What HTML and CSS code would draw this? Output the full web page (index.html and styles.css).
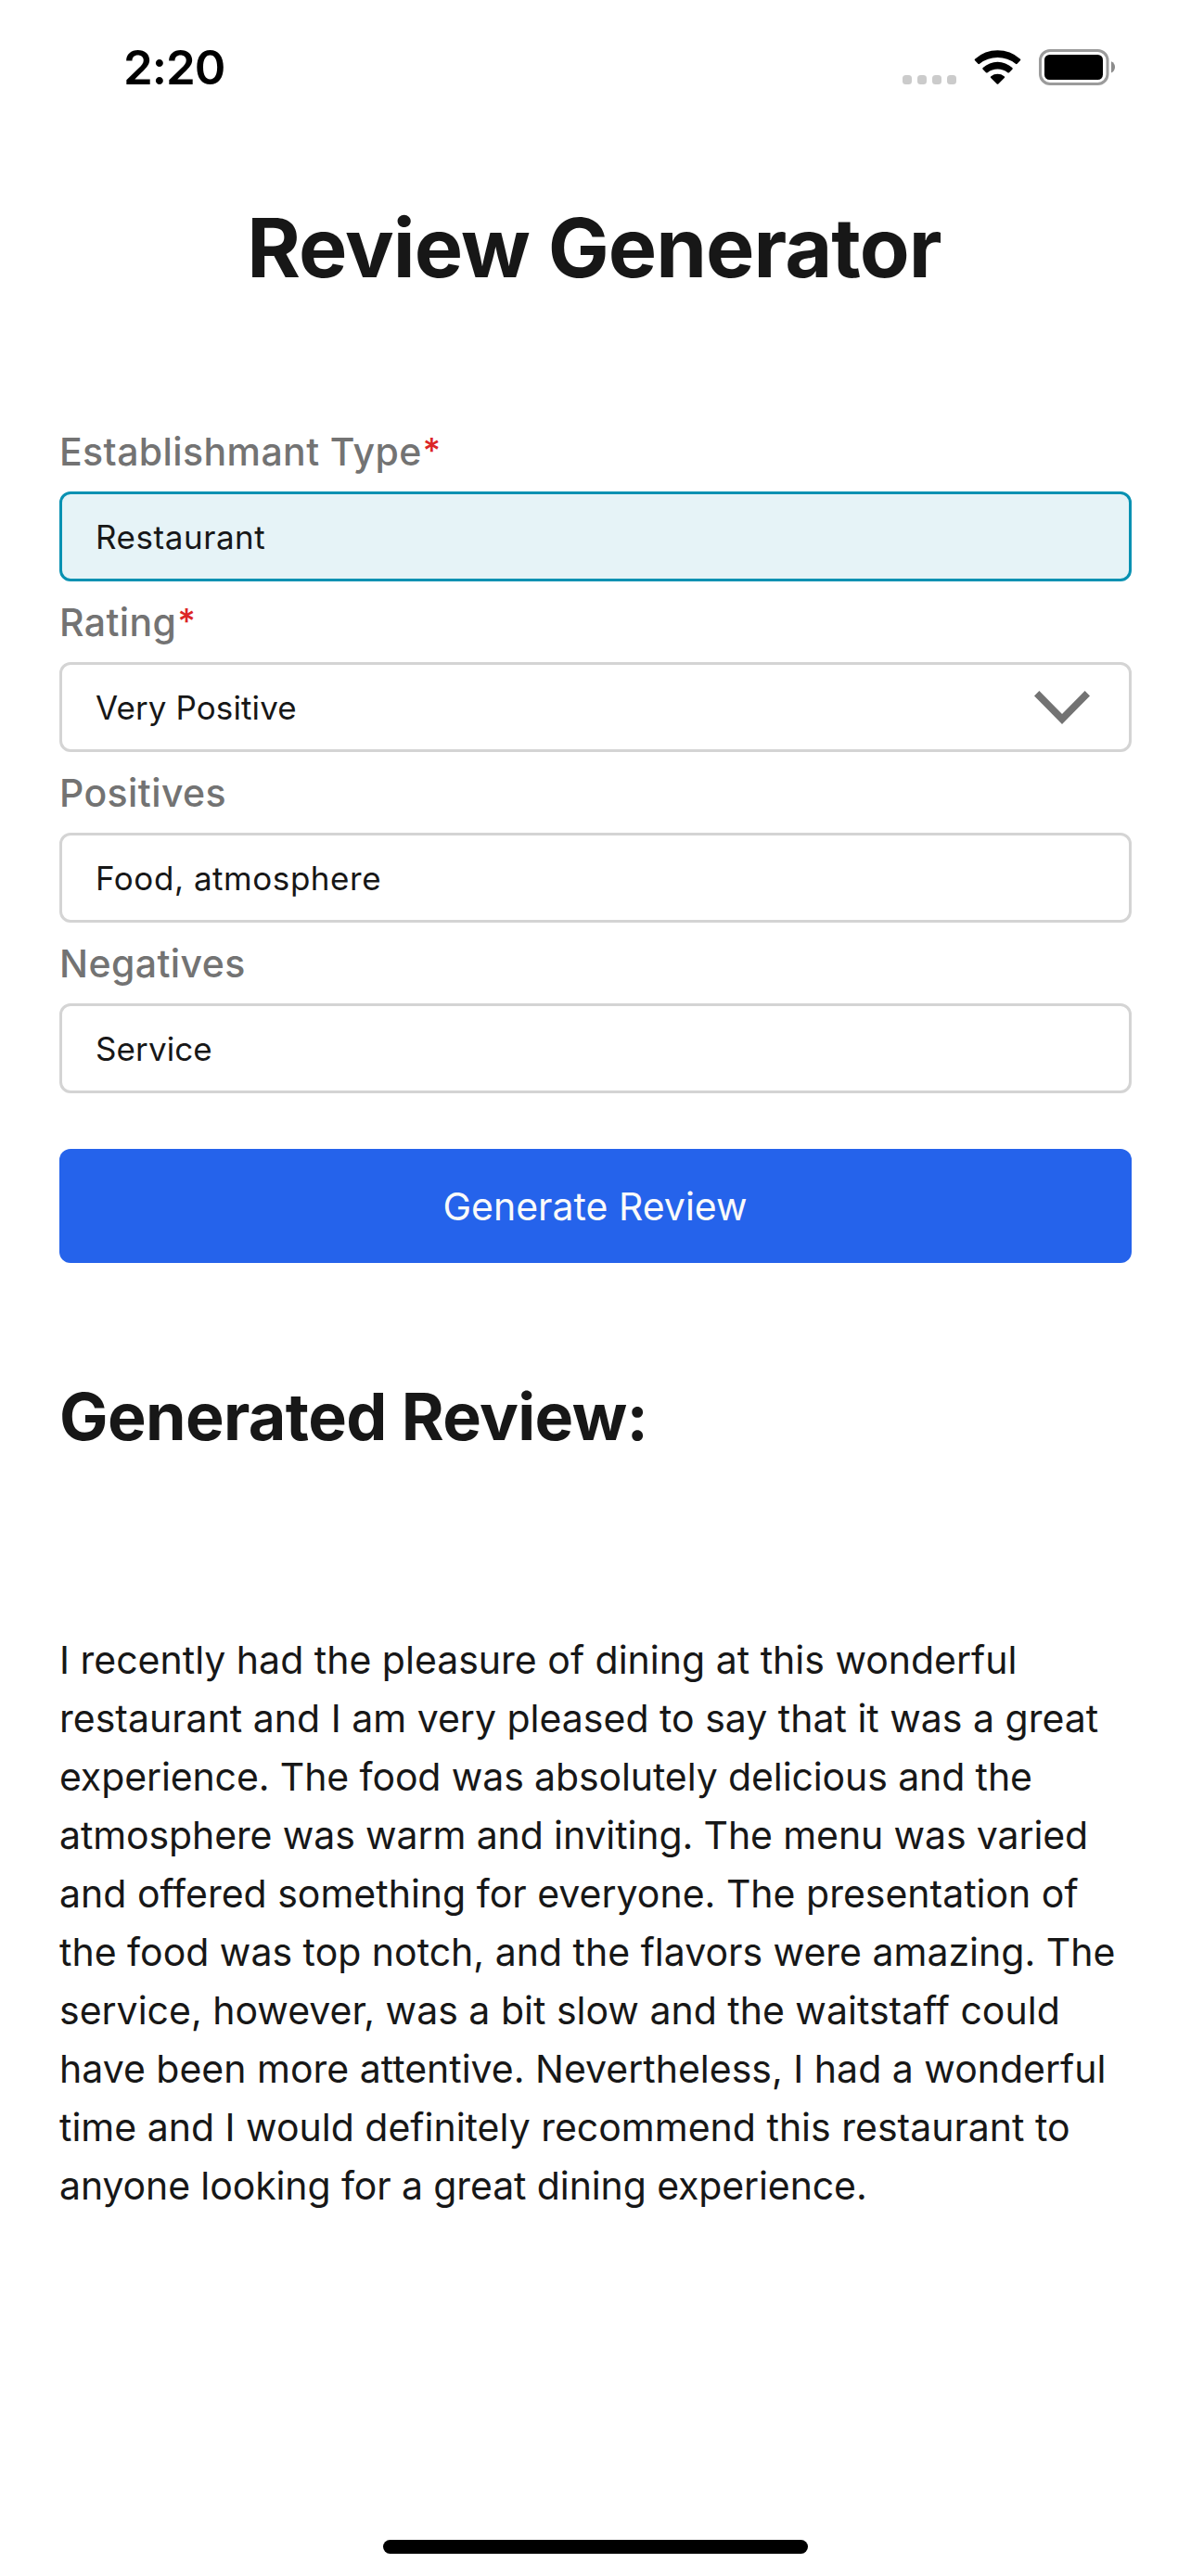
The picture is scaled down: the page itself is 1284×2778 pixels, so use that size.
FILE: index.html
```html
<!DOCTYPE html>
<html lang="en">
<head>
<meta charset="utf-8">
<title>Review Generator</title>
<link rel="stylesheet" href="styles.css">
</head>
<body>
<div class="screen">
  <header class="status-bar">
    <span class="clock">2:20</span>
    <div class="status-icons">
      <div class="signal"><i></i><i></i><i></i><i></i></div>
      <svg class="wifi" width="51" height="37" viewBox="0 0 51 37">
        <path d="M1.1 11.3Q.2 10.4 1.3 9.5A36 36 0 0 1 49.7 9.5Q50.8 10.4 49.9 11.3L46.6 14.8Q45.8 15.6 44.9 14.8A31.4 31.4 0 0 0 6.1 14.8Q5.2 15.6 4.4 14.8Z"/>
        <path d="M9.6 20.7Q8.7 19.8 9.7 18.9A23.6 23.6 0 0 1 41.3 18.9Q42.3 19.8 41.4 20.7L38 24.2Q37.2 25 36.3 24.2A17.5 17.5 0 0 0 14.7 24.2Q13.8 25 13 24.2Z"/>
        <path d="M18.2 30Q17.4 29.1 18.4 28.3A11.5 11.5 0 0 1 32.6 28.3Q33.6 29.1 32.8 30L26.3 36.5Q25.5 37.2 24.7 36.5Z"/>
      </svg>
      <svg class="battery" width="83" height="39" viewBox="0 0 83 39">
        <rect x="1.5" y="1.5" width="72.5" height="36" rx="10.5" fill="none" stroke="#9b9b9b" stroke-width="3"/>
        <rect x="6" y="6" width="63" height="27" rx="5.5"/>
        <path d="M78 13.2Q82 15 82 19.3T78 25.6Z" fill="#8c8c8c"/>
      </svg>
    </div>
  </header>

  <main class="content">
    <h1 class="title">Review Generator</h1>

    <form class="form">
      <div class="field">
        <div class="label">Establishmant Type<span class="required">*</span></div>
        <div class="input focused wide">Restaurant</div>
      </div>
      <div class="field">
        <div class="label">Rating<span class="required">*</span></div>
        <div class="input">Very Positive
          <svg class="chevron" width="60" height="36" viewBox="0 0 60 36"><path d="M0 5.4L5.4 0L30 25L54.6 0L60 5.4L30 36Z" fill="#737373"/></svg>
        </div>
      </div>
      <div class="field">
        <div class="label">Positives</div>
        <div class="input wide">Food, atmosphere</div>
      </div>
      <div class="field">
        <div class="label">Negatives</div>
        <div class="input">Service</div>
      </div>
      <button class="submit" type="button">Generate Review</button>
    </form>

    <h2 class="subtitle">Generated Review:</h2>
    <p class="review">I recently had the pleasure of dining at this wonderful<br>restaurant and I am very pleased to say that it was a great<br><span class="tight">experience. The food was absolutely delicious and the<br>atmosphere was warm and inviting. The menu was varied</span><br>and offered something for everyone. The presentation of<br>the food was top notch, and the flavors were amazing. The<br>service, however, was a bit slow and the waitstaff could<br>have been more attentive. Nevertheless, I had a wonderful<br>time and I would definitely recommend this restaurant to<br><span class="tight">anyone looking for a great dining experience.</span></p>
  </main>

  <div class="home-indicator"></div>
</div>
</body>
</html>
```
FILE: styles.css
```css
* { box-sizing: border-box; margin: 0; padding: 0; }

body {
  background: #fff;
  color: #171717;
  font-family: Inter, "Liberation Sans", sans-serif;
}

.screen {
  display: flex;
  flex-direction: column;
  width: 1284px;
  height: 2778px;
  padding-bottom: 24px;
}

/* Status bar */
.status-bar {
  display: flex;
  justify-content: space-between;
  height: 141px;
  padding: 0 81px 0 133px;
  color: #000;
}

.clock {
  margin-top: 43px;
  font-size: 51px;
  font-weight: 600;
  line-height: 60px;
  letter-spacing: -1px;
}

.status-icons {
  display: flex;
  align-items: flex-start;
}

.signal {
  display: flex;
  gap: 6px;
  margin: 81px 19px 0 0;
}

.signal i {
  width: 10px;
  height: 10px;
  border-radius: 3.5px;
  background: #cbcbcb;
}

.wifi { margin: 54px 19px 0 0; }
.battery { margin-top: 53px; }

/* Page content */
.content {
  display: flex;
  flex-direction: column;
  flex: 1;
  padding: 71px 64px 0;
}

.title {
  padding-right: 3px;
  font-size: 88px;
  font-weight: 700;
  line-height: 110px;
  letter-spacing: -0.95px;
  text-align: center;
}

.form {
  display: flex;
  flex-direction: column;
  gap: 19px;
  margin-top: 140px;
}

.field {
  display: flex;
  flex-direction: column;
  gap: 18px;
}

.label {
  height: 50px;
  color: #737373;
  font-size: 41px;
  font-weight: 500;
  line-height: 50px;
  letter-spacing: 0.4px;
  white-space: nowrap;
}

.required {
  margin-left: 1px;
  color: #dc2626;
  font-size: 37px;
  line-height: 1;
  vertical-align: 3px;
}

.input {
  display: flex;
  align-items: center;
  justify-content: space-between;
  height: 97px;
  padding: 1px 42px 0 36px;
  border: 3px solid #d4d4d4;
  border-radius: 12px;
  font-size: 35px;
  line-height: 48px;
  letter-spacing: 0.1px;
}

.input.wide { letter-spacing: 0.55px; }

.input.focused {
  border-color: #0891b2;
  background: #e6f3f7;
}

.submit {
  height: 123px;
  margin-top: 41px;
  padding-right: 1px;
  border: 0;
  border-radius: 12px;
  background: #2563eb;
  color: #fafafa;
  font: 400 41px/60px Inter, "Liberation Sans", sans-serif;
}

.subtitle {
  margin-top: 121px;
  font-size: 70px;
  font-weight: 700;
  line-height: 90px;
  letter-spacing: -0.64px;
}

.review {
  margin-top: 186px;
  font-size: 41px;
  line-height: 63px;
  white-space: nowrap;
}

.tight { letter-spacing: -0.11px; }

.home-indicator {
  align-self: center;
  width: 458px;
  height: 15px;
  border-radius: 8px;
  background: #000;
}
```
